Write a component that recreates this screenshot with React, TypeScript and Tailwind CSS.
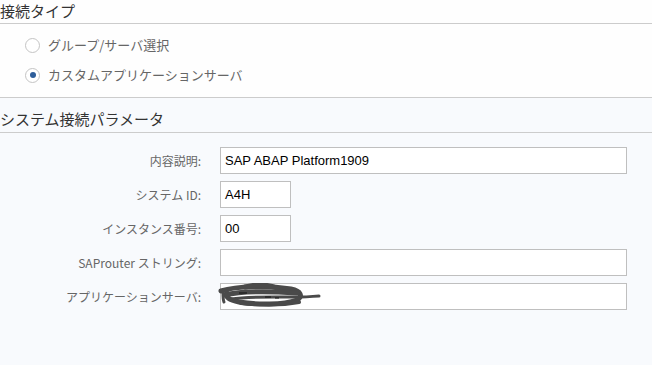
import React from "react";

const jp = { fontFamily: '"Noto Sans CJK JP", "Noto Sans", sans-serif' };

type Row = { label: string; value: string; short?: boolean; redacted?: boolean };

const rows: Row[] = [
  { label: "内容説明:", value: "SAP ABAP Platform1909" },
  { label: "システム ID:", value: "A4H", short: true },
  { label: "インスタンス番号:", value: "00", short: true },
  { label: "SAProuter ストリング:", value: "" },
  { label: "アプリケーションサーバ:", value: "", redacted: true },
];

function Radio({ checked, label }: { checked?: boolean; label: string }) {
  return (
    <div className="flex items-center h-[30px] pl-[25px]">
      <span className="w-[15px] h-[15px] rounded-full border border-[#c4c4c4] bg-white flex items-center justify-center">
        {checked && <span className="w-[6px] h-[6px] rounded-full bg-[#2d5d9a]" />}
      </span>
      <span className="ml-[8px] text-[13px] text-[#666]" style={jp}>
        {label}
      </span>
    </div>
  );
}

function Scribble() {
  return (
    <svg className="absolute left-[-4px] top-[-1px]" width="104" height="26" viewBox="0 0 104 26" fill="none">
      <g stroke="#4a4a4a" strokeLinecap="round" strokeLinejoin="round">
        <path d="M4 8 C20 3 50 2 74 6 C84 8 86 13 80 17 C66 22 40 22 22 19 C12 17 8 14 10 10" strokeWidth="5" />
        <path d="M8 12 C24 8 50 8 80 10" strokeWidth="5" />
        <path d="M14 16 C34 13 56 14 84 14 C92 14 98 13 102 13" strokeWidth="3" />
        <path d="M28 4 C40 1 52 2 60 5" strokeWidth="5" />
        <path d="M24 20 C44 22 66 22 82 19" strokeWidth="4" />
        <path d="M6 10 C6 14 6 17 7 19" strokeWidth="3" />
      </g>
      <g stroke="#111" strokeWidth="1">
        <path d="M22 10 h8 M48 14 h6 M58 15 h4" />
      </g>
    </svg>
  );
}

export default function App() {
  return (
    <div className="w-[652px] h-[365px] overflow-hidden bg-[#f8fafd] text-[#333]">
      <div className="bg-[#fefefe]">
        <div className="h-[24px] flex items-center text-[15px] text-[#333] border-b border-[#cccccc]" style={jp}>
          接続タイプ
        </div>
        <div className="pt-[6px] pb-[7px] border-b border-[#cccccc]">
          <Radio label="グループ/サーバ選択" />
          <Radio checked label="カスタムアプリケーションサーバ" />
        </div>
      </div>
      <div className="h-[35px] flex items-end pb-[2px] text-[15px] text-[#333] border-b border-[#cccccc]" style={jp}>
        システム接続パラメータ
      </div>
      <div className="pt-[14px] flex flex-col gap-[7px]">
        {rows.map((r) => (
          <div key={r.label} className="flex items-center h-[27px]">
            <div className="w-[201px] text-right text-[12px] text-[#666]" style={jp}>
              {r.label}
            </div>
            <div
              className={`relative ml-[19px] h-[27px] border border-[#bfbfbf] bg-white flex items-center pl-[4px] text-[13px] text-black ${
                r.short ? "w-[71px]" : "w-[407px]"
              }`}
              style={{ fontFamily: '"Liberation Sans", Arial, sans-serif' }}
            >
              {r.value}
              {r.redacted && <Scribble />}
            </div>
          </div>
        ))}
      </div>
    </div>
  );
}
